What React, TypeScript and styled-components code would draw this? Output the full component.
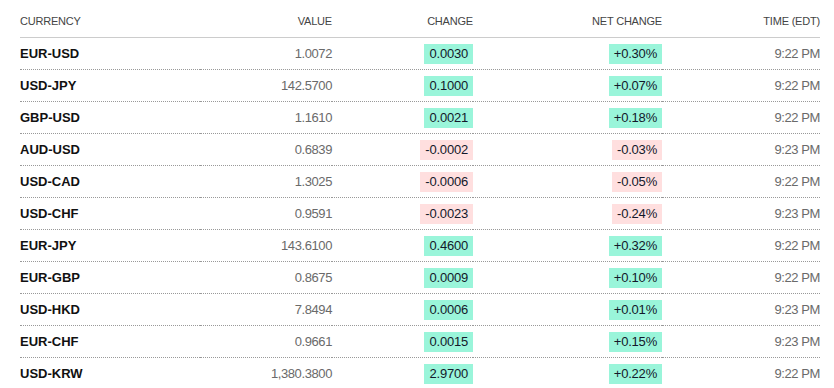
import styled, { createGlobalStyle } from "styled-components";

const Global = createGlobalStyle`
  body {
    margin: 0;
    background: #fff;
    font-family: "Liberation Sans", Arial, sans-serif;
  }
`;

const Wrap = styled.div`
  padding: 0 14px 0 20px;
`;

const Grid = styled.div`
  display: grid;
  grid-template-columns: 180px 132px 141px 189px 158px;
  width: 800px;
`;

const Head = styled.div<{ $left?: boolean }>`
  padding: 15px 0 10px;
  line-height: 12px;
  font-size: 11px;
  color: #444;
  text-transform: uppercase;
  letter-spacing: -0.2px;
  text-align: ${(p) => (p.$left ? "left" : "right")};
  border-bottom: 1px solid #ccc;
`;

const Cell = styled.div<{ $left?: boolean; $last?: boolean }>`
  height: 31px;
  display: flex;
  align-items: center;
  justify-content: ${(p) => (p.$left ? "flex-start" : "flex-end")};
  font-size: 13px;
  letter-spacing: -0.4px;
  color: #6a6a6a;
  border-bottom: ${(p) => (p.$last ? "none" : "1px dotted #999")};
`;

const Pair = styled.span`
  font-weight: 700;
  color: #111;
  letter-spacing: 0;
`;

const Badge = styled.span<{ $down?: boolean }>`
  display: inline-block;
  line-height: 20px;
  padding: 0 5px;
  letter-spacing: -0.2px;
  color: #13182a;
  background: ${(p) => (p.$down ? "#ffdfdf" : "#9af5da")};
`;

const rows = [
  ["EUR-USD", "1.0072", "0.0030", "+0.30%", "9:22 PM"],
  ["USD-JPY", "142.5700", "0.1000", "+0.07%", "9:22 PM"],
  ["GBP-USD", "1.1610", "0.0021", "+0.18%", "9:22 PM"],
  ["AUD-USD", "0.6839", "-0.0002", "-0.03%", "9:23 PM"],
  ["USD-CAD", "1.3025", "-0.0006", "-0.05%", "9:22 PM"],
  ["USD-CHF", "0.9591", "-0.0023", "-0.24%", "9:23 PM"],
  ["EUR-JPY", "143.6100", "0.4600", "+0.32%", "9:22 PM"],
  ["EUR-GBP", "0.8675", "0.0009", "+0.10%", "9:22 PM"],
  ["USD-HKD", "7.8494", "0.0006", "+0.01%", "9:23 PM"],
  ["EUR-CHF", "0.9661", "0.0015", "+0.15%", "9:23 PM"],
  ["USD-KRW", "1,380.3800", "2.9700", "+0.22%", "9:22 PM"],
];

export default function App() {
  return (
    <Wrap>
      <Global />
      <Grid>
        <Head $left>Currency</Head>
        <Head>Value</Head>
        <Head>Change</Head>
        <Head>Net Change</Head>
        <Head>Time (EDT)</Head>
        {rows.map(([pair, value, change, net, time], i) => {
          const down = change.startsWith("-");
          const last = i === rows.length - 1;
          return [
            <Cell key={pair + "a"} $left $last={last}>
              <Pair>{pair}</Pair>
            </Cell>,
            <Cell key={pair + "b"} $last={last}>{value}</Cell>,
            <Cell key={pair + "c"} $last={last}>
              <Badge $down={down}>{change}</Badge>
            </Cell>,
            <Cell key={pair + "d"} $last={last}>
              <Badge $down={down}>{net}</Badge>
            </Cell>,
            <Cell key={pair + "e"} $last={last}>{time}</Cell>,
          ];
        })}
      </Grid>
    </Wrap>
  );
}
